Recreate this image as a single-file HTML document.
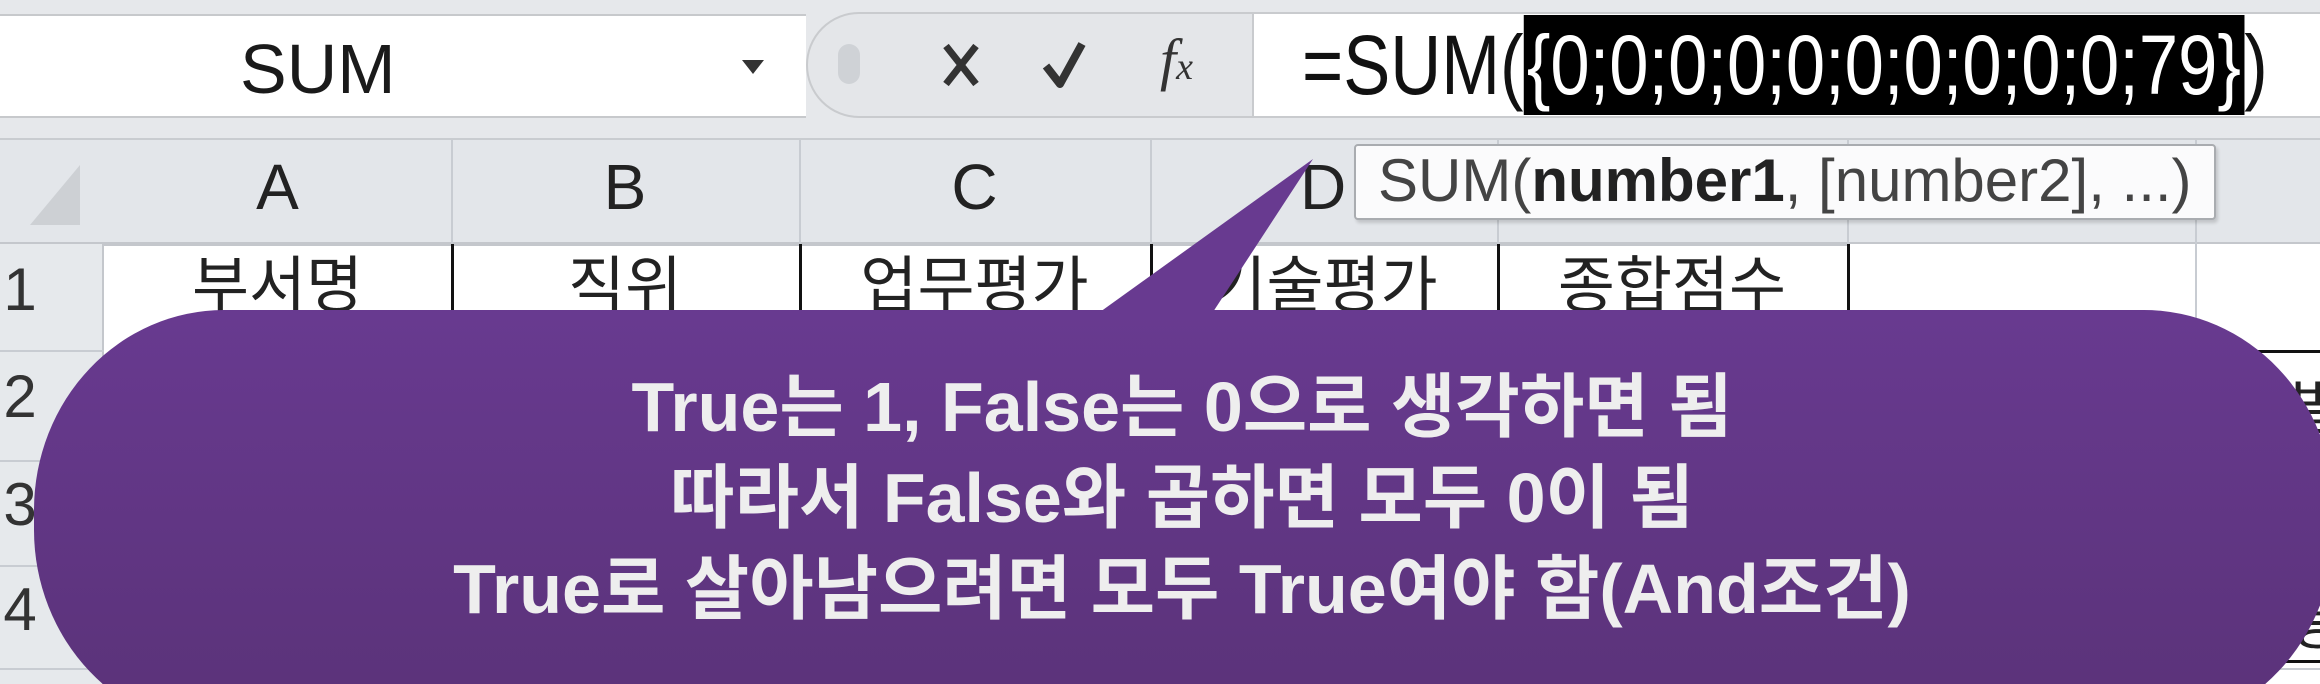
<!DOCTYPE html>
<html><head><meta charset="utf-8"><style>
*{margin:0;padding:0;box-sizing:border-box}
html,body{width:2320px;height:684px;overflow:hidden}
body{background:#fff;position:relative;font-family:"Liberation Sans","Noto Sans CJK KR",sans-serif}
.abs{position:absolute}
.t{font-family:"Liberation Sans","Noto Sans CJK KR",sans-serif;color:#222}
.vl{position:absolute;width:2px;background:#c8ccd2}
.hl{position:absolute;height:2px;background:#c8ccd2}
.cell{position:absolute;top:248px;height:64px;font-size:62px;line-height:64px;text-align:center;font-family:"Noto Sans CJK KR",sans-serif;color:#222;overflow:hidden}
.rn{position:absolute;left:0;width:40px;font-size:60px;color:#333;text-align:center}
</style></head><body>
<div class="abs" style="left:0;top:0;width:2320px;height:140px;background:#e6e8eb"></div>
<div class="abs" style="left:0;top:14px;width:806px;height:104px;background:#fff;border-top:2px solid #c7c9cc;border-bottom:2px solid #c7c9cc"></div>
<div class="abs t" style="left:240px;top:24px;font-size:70px;line-height:90px;color:#1a1a1a">SUM</div>
<div class="abs" style="left:742px;top:60px;width:0;height:0;border-left:11px solid transparent;border-right:11px solid transparent;border-top:14px solid #333"></div>
<div class="abs" style="left:806px;top:12px;width:460px;height:106px;background:#e4e6e9;border-radius:54px 0 0 54px;border:2px solid #c9cbce"></div>
<div class="abs" style="left:838px;top:44px;width:22px;height:40px;border-radius:11px;background:#cfd2d6"></div>
<svg class="abs" style="left:940px;top:38px" width="180" height="54">
<path d="M6 8 L36 46 M36 8 L6 46" stroke="#333" stroke-width="7" fill="none"/>
<path d="M106 28 L120 46 L142 6" stroke="#333" stroke-width="8" fill="none" stroke-linejoin="round"/>
</svg>
<div class="abs" style="left:1160px;top:26px;font-size:58px;font-family:'Liberation Serif',serif;font-style:italic;color:#333">f<span style="font-size:38px">x</span></div>
<div class="abs" style="left:1252px;top:12px;width:1068px;height:106px;background:#fff;border-left:2px solid #c9cbce;border-top:2px solid #c9cbce;border-bottom:2px solid #c9cbce"></div>
<div class="abs t" style="left:1302px;top:15px;font-size:84px;line-height:100px;color:#111;white-space:nowrap;transform:scaleX(0.84);transform-origin:0 0">=SUM(<span style="background:#000;color:#fff;display:inline-block;padding:0 4px">{0;0;0;0;0;0;0;0;0;0;79}</span>)</div>
<div class="abs" style="left:0;top:138px;width:2320px;height:106px;background:#e3e6ea;border-top:2px solid #c9ccd0;border-bottom:2px solid #c4c7cc"></div>
<div class="abs" style="left:30px;top:165px;width:0;height:0;border-left:50px solid transparent;border-bottom:60px solid #cdd0d4"></div>
<div class="abs" style="left:0;top:244px;width:104px;height:440px;background:#e6e9ec;border-right:2px solid #c4c7cc"></div>
<div class="hl" style="left:0;top:350px;width:104px"></div>
<div class="hl" style="left:0;top:460px;width:104px"></div>
<div class="hl" style="left:0;top:565px;width:104px"></div>
<div class="hl" style="left:0;top:668px;width:2320px"></div>
<div class="vl" style="left:451px;top:140px;height:104px"></div>
<div class="vl" style="left:799px;top:140px;height:104px"></div>
<div class="vl" style="left:1150px;top:140px;height:104px"></div>
<div class="vl" style="left:1497px;top:140px;height:104px"></div>
<div class="vl" style="left:1847px;top:140px;height:104px"></div>
<div class="vl" style="left:2195px;top:140px;height:104px"></div>
<div class="abs t" style="left:104px;width:347px;top:150px;text-align:center;font-size:64px;color:#222">A</div>
<div class="abs t" style="left:451px;width:348px;top:150px;text-align:center;font-size:64px;color:#222">B</div>
<div class="abs t" style="left:799px;width:351px;top:150px;text-align:center;font-size:64px;color:#222">C</div>
<div class="abs t" style="left:1300px;top:150px;font-size:64px;color:#222">D</div>
<div class="abs" style="left:104px;top:244px;width:1743px;height:2px;background:#c4c7cc"></div>
<div class="abs" style="left:451px;top:244px;width:3px;height:70px;background:#111"></div>
<div class="abs" style="left:799px;top:244px;width:3px;height:70px;background:#111"></div>
<div class="abs" style="left:1150px;top:244px;width:3px;height:70px;background:#111"></div>
<div class="abs" style="left:1497px;top:244px;width:3px;height:70px;background:#111"></div>
<div class="abs" style="left:1847px;top:244px;width:3px;height:70px;background:#111"></div>
<div class="vl" style="left:2195px;top:244px;height:440px"></div>
<div class="cell" style="left:104px;width:347px">부서명</div>
<div class="cell" style="left:451px;width:348px">직위</div>
<div class="cell" style="left:799px;width:351px">업무평가</div>
<div class="cell" style="left:1150px;width:347px">기술평가</div>
<div class="cell" style="left:1497px;width:350px">종합점수</div>
<div class="rn" style="top:255px">1</div>
<div class="rn" style="top:362px">2</div>
<div class="rn" style="top:470px">3</div>
<div class="rn" style="top:575px">4</div>
<div class="abs" style="left:2250px;top:350px;width:70px;height:3px;background:#111"></div>
<div class="abs" style="left:2250px;top:660px;width:70px;height:3px;background:#111"></div>
<div class="abs" style="left:2290px;top:360px;font-size:60px;font-family:'Noto Sans CJK KR',sans-serif;color:#222">별</div>
<div class="abs" style="left:2290px;top:575px;font-size:60px;font-family:'Noto Sans CJK KR',sans-serif;color:#222">용</div>
<div class="abs" style="left:1354px;top:144px;width:862px;height:76px;background:#fbfbfc;border:2px solid #a9acb0;border-radius:4px;box-shadow:2px 3px 3px rgba(0,0,0,.15)"></div>
<div class="abs t" style="left:1378px;top:146px;font-size:60px;line-height:70px;color:#444;white-space:nowrap">SUM(<b style="color:#222">number1</b>, [number2], ...)</div>
<svg class="abs" style="left:0;top:0" width="2320" height="684">
<defs><linearGradient id="g" x1="0" y1="0" x2="0" y2="1"><stop offset="0" stop-color="#683a90"/><stop offset="1" stop-color="#5a3278"/></linearGradient></defs>
<path d="M1100 312 L1313 159 L1213 312 Z" fill="#683a90"/>
<rect x="34" y="310" width="2300" height="420" rx="190" ry="200" fill="url(#g)"/>
</svg>
<div class="abs" style="left:0;top:362px;width:2320px;height:300px;overflow:hidden;text-align:center;color:#eeeeee;font-weight:bold;font-size:70px;line-height:91px;font-family:'Liberation Sans','Noto Sans CJK KR',sans-serif;white-space:nowrap;padding-left:44px">
True는 1, False는 0으로 생각하면 됨<br>따라서 False와 곱하면 모두 0이 됨<br>True로 살아남으려면 모두 True여야 함(And조건)</div>
</body></html>
